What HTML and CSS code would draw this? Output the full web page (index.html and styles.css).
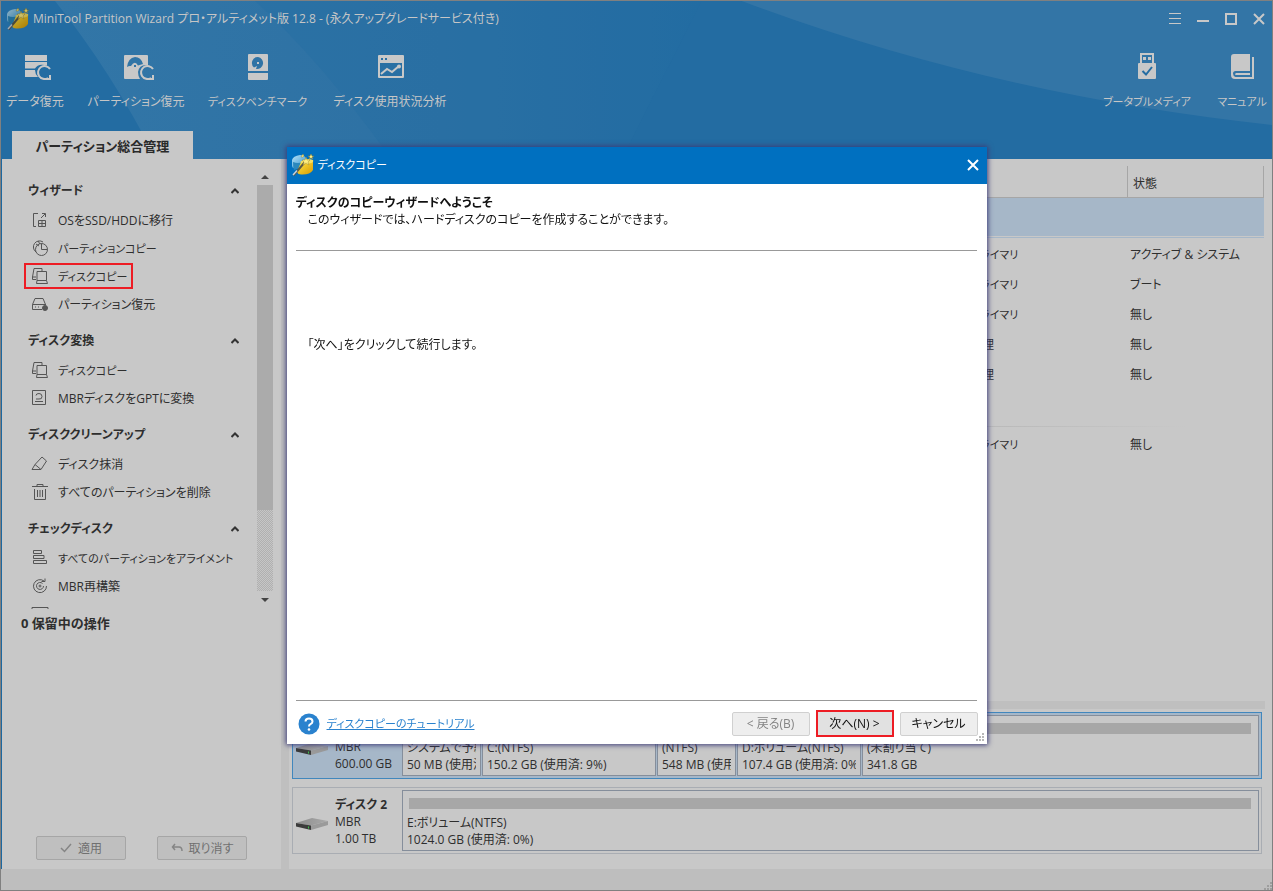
FILE: index.html
```html
<!DOCTYPE html>
<html lang="ja">
<head>
<meta charset="utf-8">
<meta name="viewport" content="width=device-width, initial-scale=1">
<title>MiniTool Partition Wizard</title>
<link rel="stylesheet" href="styles.css">
</head>
<body>
<svg class="defs" aria-hidden="true">
  <defs>
    <linearGradient id="gold" x1="0" y1="0" x2="1" y2="1"><stop offset="0" stop-color="#ffe84a"/><stop offset="1" stop-color="#d89a00"/></linearGradient>
    <linearGradient id="sky" x1="0" y1="0" x2="1" y2="1"><stop offset="0" stop-color="#b9e2f7"/><stop offset="1" stop-color="#2f93cf"/></linearGradient>
    <linearGradient id="steel" x1="0" y1="0" x2="1" y2="0"><stop offset="0" stop-color="#8d8d8d"/><stop offset="1" stop-color="#a9a9a9"/></linearGradient>
    <symbol id="app" viewBox="0 0 22 22">
      <path d="M0 6q1-4 8-5q4 0 6 3l-4 7l-9 3q-2-3-1-8z" fill="url(#sky)"/>
      <path d="M1 8q5 2 10 0v5l-9 3q-1-3-1-8z" fill="#2b88bd"/>
      <path d="M9 8q6 2 12-1v9q-3 5-12 4.500q-3 0-4-2.500z" fill="url(#gold)"/>
      <path d="M8 8q6-5 13-2q1 2-2 3q-6 2-11-1z" fill="#f5df62"/>
      <path d="M1.500 21.500L12.500 8.500" stroke="#5a5a4a" stroke-width="2"/>
      <path d="M1 21L5 16.500" stroke="#c4d2e2" stroke-width="1.500"/>
      <path d="M14 3l1 3 3 0-2 2 1 3-3-2-3 2 1-3-2-2h3zM19 0l1 2h2l-2 1 1 2-2-1-2 1 1-2-2-1h2zM11 0l1 2-1 1-2 0z" fill="#ffee80" stroke="#8a7a30" stroke-width=".4"/>
    </symbol>
    <symbol id="diskcopy" viewBox="0 0 18 18">
      <path d="M5 12.500H1.500V10L3 1.500H11V4M1.500 10H5M6 4.500H15.500V13.500H6zM6 13.500L5.500 16.500H16.500L15.500 13.500"/>
    </symbol>
    <symbol id="up" viewBox="0 0 8 6"><path d="M.5 5L4 1.500L7.500 5" fill="none" stroke="#333" stroke-width="2"/></symbol>
    <symbol id="drive" viewBox="0 0 32 14">
      <path d="M0 6L16 1L32 4L15 8.500z" fill="url(#steel)"/>
      <path d="M15 8.500L32 4V8L15 13z" fill="#9a9a9a"/>
      <path d="M0 6L15 8.500V13L0 9.500z" fill="#3b3b3b"/>
      <path d="M12 9.500h1v2h-1z" fill="#3cc24a"/>
    </symbol>
    <symbol id="grip" viewBox="0 0 8 8"><path d="M6 0h2v2H6zM3 3h2v2H3zM6 3h2v2H6zM0 6h2v2H0zM3 6h2v2H3zM6 6h2v2H6z" fill="currentColor"/></symbol>
  </defs>
</svg>

<div class="window">
  <header class="banner">
    <svg class="banner-art" viewBox="0 0 1270 158" preserveAspectRatio="none" aria-hidden="true">
      <defs>
        <linearGradient id="ray" x1="0" x2="1"><stop offset="0" stop-color="#3276a7"/><stop offset=".6" stop-color="#2d71a4"/><stop offset="1" stop-color="#236ca2"/></linearGradient>
      </defs>
      <path d="M54 0H700L620 158H155Q110 70 54 0z" fill="url(#ray)"/>
      <path d="M254 0H700L620 158H390Q320 60 254 0z" fill="#236ca2" opacity=".35"/>
      <path d="M740 0Q990 94 1270 124V0z" fill="#3375a6"/>
    </svg>
    <div class="titlebar">
      <svg class="app-icon dim"><use href="#app"/></svg>
      <h1 class="title">MiniTool Partition Wizard プロ・アルティメット版 12.8 - (永久アップグレードサービス付き)</h1>
      <div class="window-controls">
        <button aria-label="メニュー"><svg viewBox="0 0 14 14"><path d="M1 1.500H13M1 6.500H13M1 11.500H13"/></svg></button>
        <button aria-label="最小化"><svg viewBox="0 0 14 14"><path d="M1 9H13" stroke-width="2"/></svg></button>
        <button aria-label="最大化"><svg viewBox="0 0 14 14"><path d="M2 2H12V12H2z" stroke-width="2"/></svg></button>
        <button aria-label="閉じる"><svg viewBox="0 0 14 14"><path d="M2 2L12 12M12 2L2 12" stroke-width="2"/></svg></button>
      </div>
    </div>
    <nav class="toolbar">
      <button class="tool t57">
        <svg viewBox="0 0 28 28"><path d="M4 2H26V8H4zM4 9H26V12.500Q17 10 14 15.500H4zM4 17H14Q14 21 17 24H4z"/><path class="ln" d="M29 16A6.500 6.500 0 1 0 27 25M29 22v4h-5"/></svg>
        <span>データ復元</span></button>
      <button class="tool t93">
        <svg viewBox="0 0 28 28"><path fill-rule="evenodd" d="M2 3q0-1 1-1H25q1 0 1 1V12Q17 11 16 19Q16 23 18 26H3q-1 0-1-1zM5 14Q7 12.500 9 13Q13 7 16 12.500L21 11Q19 4 13 4Q6 5 5 14zM12 12h2v2h-2z"/><path class="ln" d="M31 16A6.500 6.500 0 1 0 29 25M31 22v4h-5"/></svg>
        <span>パーティション復元</span></button>
      <button class="tool t99">
        <svg viewBox="0 0 28 28"><path fill-rule="evenodd" d="M4 2q0-1 1-1H23q1 0 1 1V18H4zM14 4A6 6 0 0 0 10 14.500L13 13L12 16A6 6 0 1 0 14 4zM13 9h2v2h-2zM4 20H24V26q0 1-1 1H5q-1 0-1-1z"/></svg>
        <span class="kana">ディスクベンチマーク</span></button>
      <button class="tool t115">
        <svg viewBox="0 0 28 28"><path fill-rule="evenodd" d="M2 3q0-1 1-1H27q1 0 1 1V24q0 1-1 1H3q-1 0-1-1zM4 10V23H26V10zM5 5v2h2V5zM9 5v2h2V5z"/><path class="ln" d="M5 21L11 16L16 19L23 13"/><circle cx="23" cy="13.500" r="2"/></svg>
        <span>ディスク使用状況分析</span></button>
      <button class="tool t89 push">
        <svg viewBox="0 0 28 28"><path fill-rule="evenodd" d="M7 0H21V10H22q1 0 1 1V25q0 1-1 1H6q-1 0-1-1V11q0-1 1-1H7zM9 2V10H19V2zM10 4h3v3h-3zM15 4h3v3h-3z"/><path d="M9.500 18L13 21.500L19 14" fill="none" stroke="#236ca2" stroke-width="2"/></svg>
        <span class="kana">ブータブルメディア</span></button>
      <button class="tool t50">
        <svg viewBox="0 0 28 28"><path d="M6 1H22V18H7.500Q5 18 5 20.500T7.500 24H24V4H26V26H7Q3 26 3 22V4Q3 1 6 1zM8 20H22V22H8q-1 0-1-1z"/></svg>
        <span class="kana">マニュアル</span></button>
    </nav>
    <div class="tabs"><button class="tab">パーティション総合管理</button></div>
  </header>

  <main class="body">
    <aside class="sidebar">
      <div class="scroller">
        <div class="groups">
          <section>
            <h2>ウィザード<svg><use href="#up"/></svg></h2>
            <ul>
              <li><a href="#os"><svg viewBox="0 0 18 18"><path d="M7 2.500H2.500V15.500H5M7.500 9.500H14.500V15.500H7.500zM11 9.500V15.500M7.500 12.500H14.500M10 7L14 3M11 2.500H14.500V6"/></svg>OSをSSD/HDDに移行</a></li>
              <li><a href="#pcopy" class="kana"><svg viewBox="0 0 18 18"><path d="M5 13A6 6 0 1 1 12 3M10.500 4.500A6 6 0 1 0 16.500 10.500M10.500 4.500V10.500H16.500M16.500 10.500A6 6 0 0 0 10.500 4.500M5 5L8 7M7 2L9 5"/></svg>パーティションコピー</a></li>
              <li><a href="#dcopy" class="kana marked"><svg><use href="#diskcopy"/></svg>ディスクコピー</a></li>
              <li><a href="#precover"><svg viewBox="0 0 18 18"><path d="M1.500 9.500L4 3.500H12L14.500 9.500M1.500 9.500H15M1.500 9.500V14.500H11M4 12H5M7 12H8"/><circle cx="14" cy="13" r="2.500" fill="#555"/></svg>パーティション復元</a></li>
            </ul>
          </section>
          <section>
            <h2>ディスク変換<svg><use href="#up"/></svg></h2>
            <ul>
              <li><a href="#dcopy2" class="kana"><svg><use href="#diskcopy"/></svg>ディスクコピー</a></li>
              <li><a href="#gpt"><svg viewBox="0 0 18 18"><path d="M1.500 1.500H14.500V15.500H1.500zM4 12.500H12M5 6.500Q5 4.500 8 4.500T11 7.500T8 10H5"/></svg>MBRディスクをGPTに変換</a></li>
            </ul>
          </section>
          <section>
            <h2>ディスククリーンアップ<svg><use href="#up"/></svg></h2>
            <ul>
              <li><a href="#wipe"><svg viewBox="0 0 18 18"><path d="M1 14.500H10L15.500 6L11 2L4 9.500L1 14.500M4 9.500L10 14.500"/></svg>ディスク抹消</a></li>
              <li><a href="#del"><svg viewBox="0 0 18 18"><path d="M1 3.500H17M6 3.500V1.500H12V3.500M3.500 6V16.500H14.500V6M6.500 7V14M9 7V14M11.500 7V14"/></svg>すべてのパーティションを削除</a></li>
            </ul>
          </section>
          <section>
            <h2>チェックディスク<svg><use href="#up"/></svg></h2>
            <ul>
              <li><a href="#align" class="kana"><svg viewBox="0 0 18 18"><path d="M2.500 1.500H10.500V4.500H2.500zM2.500 6.500H13V9.500H2.500zM2.500 11.500H15.500V14.500H2.500z"/></svg>すべてのパーティションをアライメント</a></li>
              <li><a href="#mbr"><svg viewBox="0 0 18 18"><path d="M13 4A6.500 6.500 0 1 0 15.500 9M10.500 4.500H14V1.500M11.500 6.500A3.500 3.500 0 1 0 12.500 9"/><circle cx="9" cy="9" r="1"/></svg>MBR再構築</a></li>
              <li><a href="#surface" class="kana"><svg viewBox="0 0 18 18"><path d="M1 2.500H17V15H1z"/></svg>サーフェステスト</a></li>
            </ul>
          </section>
        </div>
        <div class="scrollbar" aria-hidden="true">
          <svg viewBox="0 0 16 16"><path d="M4 10L8 6L12 10z" fill="#444"/></svg>
          <div class="track"><div class="thumb"></div></div>
          <svg viewBox="0 0 16 16"><path d="M4 7L8 11L12 7z" fill="#444"/></svg>
        </div>
      </div>
      <p class="pending">0 保留中の操作</p>
      <div class="actions">
        <button class="btn dimmed" disabled><svg viewBox="0 0 12 12"><path d="M1 6L4.500 9.500L11 2" fill="none" stroke="#858585" stroke-width="1.500"/></svg>適用</button>
        <button class="btn dimmed" disabled><svg viewBox="0 0 12 12"><path d="M4 2L1.500 5L4 8M1.500 5H8Q11 5 11 9" fill="none" stroke="#858585" stroke-width="1.500"/></svg>取り消す</button>
      </div>
    </aside>

    <section class="content">
      <div class="table-area">
        <table class="partitions">
          <colgroup><col><col class="c-type"><col class="c-state"></colgroup>
          <thead><tr><th></th><th></th><th>状態</th></tr></thead>
          <tbody>
            <tr class="disk selected"><td colspan="3"></td></tr>
            <tr><td></td><td class="kana">プライマリ</td><td>アクティブ &amp; システム</td></tr>
            <tr><td></td><td class="kana">プライマリ</td><td>ブート</td></tr>
            <tr><td></td><td class="kana">プライマリ</td><td>無し</td></tr>
            <tr><td></td><td>論理</td><td>無し</td></tr>
            <tr><td></td><td>論理</td><td>無し</td></tr>
            <tr class="disk"><td colspan="3"><div class="fade"></div></td></tr>
            <tr><td></td><td class="kana">プライマリ</td><td>無し</td></tr>
          </tbody>
        </table>
      </div>
      <div class="splitter"></div>
      <div class="disks">
        <article class="disk-card active">
          <svg class="drive"><use href="#drive"/></svg>
          <div class="disk-label"><strong>ディスク 1</strong><span>MBR</span><span>600.00 GB</span></div>
          <div class="blocks split">
            <div class="block"><i></i><span>システムで予約済み</span><span>50 MB (使用済: 57%)</span></div>
            <div class="block"><i></i><span>C:(NTFS)</span><span>150.2 GB (使用済: 9%)</span></div>
            <div class="block"><i></i><span>(NTFS)</span><span>548 MB (使用済: 15%)</span></div>
            <div class="block"><i></i><span>D:ボリューム(NTFS)</span><span>107.4 GB (使用済: 0%)</span></div>
            <div class="block"><i></i><span>(未割り当て)</span><span>341.8 GB</span></div>
          </div>
        </article>
        <article class="disk-card">
          <svg class="drive"><use href="#drive"/></svg>
          <div class="disk-label"><strong>ディスク 2</strong><span>MBR</span><span>1.00 TB</span></div>
          <div class="blocks">
            <div class="block"><i></i><span>E:ボリューム(NTFS)</span><span>1024.0 GB (使用済: 0%)</span></div>
          </div>
        </article>
      </div>
    </section>
  </main>
  <footer class="statusbar"><svg><use href="#grip"/></svg></footer>
</div>

<div class="modal-layer">
  <div class="dialog" role="dialog" aria-labelledby="dlg-title">
    <div class="dialog-title">
      <svg class="app-icon"><use href="#app"/></svg>
      <h2 id="dlg-title" class="kana">ディスクコピー</h2>
      <button class="dialog-close" aria-label="閉じる"><svg viewBox="0 0 12 12"><path d="M1 1L11 11M11 1L1 11" stroke="#fff" stroke-width="2"/></svg></button>
    </div>
    <div class="dialog-head">
      <h3>ディスクのコピーウィザードへようこそ</h3>
      <p>このウィザードでは、ハードディスクのコピーを作成することができます。</p>
    </div>
    <div class="dialog-body"><p>「次へ」をクリックして続行します。</p></div>
    <div class="dialog-foot">
      <svg class="help" viewBox="0 0 22 22"><circle cx="11" cy="11" r="10.500" fill="#2a82ce"/><path d="M7.500 8.500Q7.500 5.500 11 5.500T14.500 8.500Q14.500 10 12.500 11.200Q11 12 11 13.500" fill="none" stroke="#fff" stroke-width="2"/><circle cx="11" cy="16.500" r="1.300" fill="#fff"/></svg>
      <a href="#tutorial" class="kana">ディスクコピーのチュートリアル</a>
      <div class="dialog-buttons">
        <button class="btn" disabled>&lt; 戻る(B)</button>
        <button class="btn next">次へ(N) &gt;</button>
        <button class="btn">キャンセル</button>
      </div>
    </div>
    <svg class="dialog-grip"><use href="#grip"/></svg>
  </div>
</div>
</body>
</html>
```
FILE: styles.css
```css
* { box-sizing: border-box; }

body {
  margin: 0;
  background: #c8c8c8;
  color: #2e2e2e;
  font: 12px/17px "Open Sans", "Noto Sans CJK JP", sans-serif;
  font-feature-settings: "palt";
}

h1, h2, h3, p, ul { margin: 0; padding: 0; font-size: inherit; }
ul { list-style: none; }
button { font: inherit; font-feature-settings: inherit; color: inherit; padding: 0; border: 0; background: none; }
svg { display: block; flex: none; }
.defs { position: absolute; width: 0; height: 0; }
.kana { font-size: 11px; }

.window {
  min-height: 100vh;
  display: flex;
  flex-direction: column;
  border: 1px solid #808080;
}

/* Banner */
.banner {
  position: relative;
  display: flex;
  flex-direction: column;
  background: #236ca2;
  color: #c6c6c6;
}
.banner-art { position: absolute; inset: 0; width: 100%; height: 100%; }
.titlebar, .toolbar, .tabs { position: relative; display: flex; }
.titlebar { height: 35px; align-items: center; padding: 0 6px; }
.app-icon { width: 22px; height: 22px; }
.dim { filter: brightness(0.8); }
.title { margin-left: 4px; font-weight: 400; white-space: nowrap; }
.window-controls { margin-left: auto; display: flex; gap: 14px; }
.window-controls svg { width: 14px; height: 14px; fill: none; stroke: #c8c8c8; }

.toolbar { gap: 25px; height: 95px; padding: 17px 5px 0; }
.tool { display: flex; flex-direction: column; align-items: center; gap: 12px; height: 66px; white-space: nowrap; }
.tool svg { width: 28px; height: 28px; overflow: visible; fill: #c8c8c8; }
.tool .ln { fill: none; stroke: #c8c8c8; stroke-width: 2; }
.tool.push { margin-left: auto; }
.t57 { width: 58px; }
.t93 { width: 94px; }
.t99 { width: 99px; }
.t115 { width: 116px; }
.t89 { width: 90px; }
.t50 { width: 50px; }

.tabs { padding-left: 11px; }
.tab { width: 181px; height: 28px; padding-top: 2px; background: #c8c8c8; color: #2a2a2a; font-size: 13px; font-weight: 700; }

/* Body */
.body { flex: 1; display: flex; border-left: 1px solid #1d68a0; background: #c8c8c8; }
.sidebar { width: 279px; flex: none; display: flex; flex-direction: column; }
.scroller { height: 450px; display: flex; padding: 10px 8px 0 21px; }
.groups { flex: 1; height: 440px; overflow: hidden; padding: 6px 0 0 5px; }
.groups section { margin-bottom: 7px; }
.groups h2 { height: 31px; display: flex; align-items: center; justify-content: space-between; padding-right: 18px; }
.groups h2 svg { width: 8px; height: 6px; }
.groups li { height: 28px; display: flex; align-items: center; }
.groups a { height: 26px; display: flex; align-items: center; gap: 9px; margin-left: -4px; padding: 0 4px 0 5px; border: 2px solid transparent; color: inherit; text-decoration: none; white-space: nowrap; }
.groups a svg { width: 18px; height: 18px; fill: none; stroke: #555; }
.groups a.marked { border-color: #ed1c24; }
.scrollbar { width: 16px; display: flex; flex-direction: column; }
.scrollbar svg { width: 16px; height: 16px; }
.track { height: 406px; background: repeating-conic-gradient(#b0b0b0 0 25%, #c6c6c6 0 50%) 0 0 / 2px 2px; }
.thumb { height: 80%; background: #ababab; }
.pending { padding: 6px 19px; font-size: 13px; font-weight: 700; }
.actions { margin-top: auto; display: flex; justify-content: space-between; padding: 0 34px 9px; }

.btn { height: 24px; display: flex; align-items: center; justify-content: center; gap: 6px; border: 1px solid #d0d0d0; border-radius: 2px; background: #eee; white-space: nowrap; }
.btn:disabled { color: #848484; }
.btn.dimmed { width: 90px; border-color: #a6a6a6; background: #bfbfbf; color: #707070; }
.btn svg { width: 12px; height: 12px; }

/* Partition table */
.content { flex: 1; min-width: 0; display: flex; flex-direction: column; border-left: 8px solid #bfbfbf; }
.table-area { flex: 1; padding: 7px 8px 0 0; }
.partitions { width: 100%; table-layout: fixed; border-collapse: separate; border-spacing: 0; }
.c-type { width: 160px; }
.c-state { width: 136px; }
.partitions th { height: 32px; padding: 3px 5px 0; border-right: 1px solid #a6a6a6; border-bottom: 1px solid #a6a6a6; text-align: left; font-weight: 400; }
.partitions td { height: 30px; padding: 0 2px; }
.partitions .disk td { height: 40px; padding: 0; }
.partitions .selected td { height: 41px; background: linear-gradient(#a6b7c8 38px, #c8c8c8 38px 39px, #a6b7c8 39px 40px, #c8c8c8 40px); }
.fade { height: 1px; margin-top: 34px; background: linear-gradient(90deg, #b8b8b8 70%, #c8c8c8 92%); }
.splitter { height: 8px; margin-right: 7px; background: #bfbfbf; }

/* Disk map */
.disks { display: flex; flex-direction: column; gap: 8px; padding: 3px 10px 15px 3px; }
.disk-card { height: 67px; display: flex; align-items: center; padding: 0 2px 0 3px; border: 1px solid #a9adb3; }
.disk-card.active { border-color: #4187bd; background: #a6b7c8; }
.drive { width: 32px; height: 14px; margin-top: 6px; }
.disk-label { width: 74px; padding: 2px 0 0 7px; display: flex; flex-direction: column; white-space: nowrap; }
.blocks { flex: 1; min-width: 0; height: 61px; display: grid; gap: 1px; }
.split { grid-template-columns: 79fr 174fr 79fr 124fr 397fr; }
.block { min-width: 0; overflow: hidden; display: flex; flex-direction: column; padding: 7px 4px 0; border: 1px solid #858e9b; background: #c8c8c8; white-space: nowrap; }
.block i { flex: none; height: 11px; margin: 0 3px 5px 2px; background: #a7a7a7; }
.block span { overflow: hidden; }

.statusbar { height: 21px; display: flex; justify-content: flex-end; align-items: flex-end; background: #bebebe; color: #9d9d9d; }
.statusbar svg { width: 8px; height: 8px; }

/* Wizard dialog */
.modal-layer { position: fixed; inset: 0; display: flex; align-items: center; justify-content: center; }
.dialog { position: relative; width: 700px; height: 597px; display: flex; flex-direction: column; background: #fff; color: #111; box-shadow: 0 0 5px 1px #3c3c78; }
.dialog-title { height: 37px; display: flex; align-items: center; padding: 0 8px 2px 5px; background: #0070c0; color: #fff; }
.dialog-title h2 { margin-left: 4px; font-weight: 400; }
.dialog-close { margin-left: auto; }
.dialog-close svg { width: 12px; height: 12px; }
.dialog-head { height: 67px; margin: 0 10px 0 9px; padding-top: 10px; border-bottom: 1px solid #999; }
.dialog-head p { padding-left: 12px; }
.dialog-body { flex: 1; margin: 0 10px 0 9px; padding: 85px 12px 0; border-bottom: 1px solid #999; }
.dialog-foot { height: 43px; display: flex; align-items: center; padding: 2px 9px 0 11px; }
.help { width: 22px; height: 22px; }
.dialog-foot a { margin-left: 7px; color: #2a82ce; }
.dialog-buttons { margin-left: auto; display: flex; align-items: center; gap: 6px; }
.dialog-buttons .btn { width: 78px; }
.dialog-buttons .next { height: 27px; border: 2px solid #ed1c24; border-radius: 0; background: #e1e1e1; }
.dialog-grip { position: absolute; right: 3px; bottom: 3px; width: 8px; height: 8px; color: #b8b8b8; }
```
